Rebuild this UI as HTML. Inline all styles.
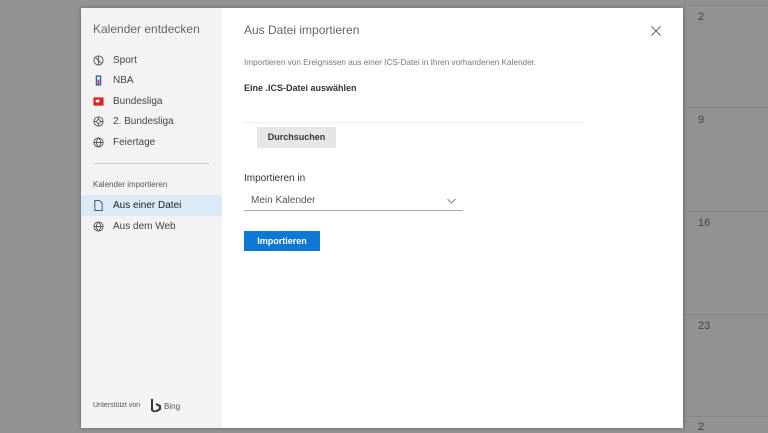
<!DOCTYPE html>
<html><head><meta charset="utf-8"><style>
*{margin:0;padding:0;box-sizing:border-box}
body{width:768px;height:432px;overflow:hidden;background:#929292;font-family:"Liberation Sans",sans-serif;position:relative;color:#333}
.hl{position:absolute;left:684px;right:0;height:1px;background:#888}
.vl{position:absolute;left:684px;top:0;width:1px;height:432px;background:#888}
.num{position:absolute;left:698px;font-size:11px;color:#444}
.modal{position:absolute;left:81px;top:8px;width:602px;height:420px;background:#fff;box-shadow:0 0 4px rgba(0,0,0,.3)}
.side{position:absolute;left:0;top:0;width:141px;height:420px;background:#f3f3f3}
.t{position:absolute;white-space:nowrap}
.ic{position:absolute;left:12px;width:11px;height:11px}
</style></head><body>
<div class="vl"></div>
<div class="hl" style="top:5px"></div><div class="hl" style="top:107px"></div><div class="hl" style="top:211px"></div><div class="hl" style="top:314px"></div><div class="hl" style="top:416px"></div>
<div class="num" style="top:11px">2</div><div class="num" style="top:114px">9</div><div class="num" style="top:217px">16</div><div class="num" style="top:320px">23</div><div class="num" style="top:421px">2</div>
<div class="modal">
<div class="side">
<div class="t" style="left:12px;top:14px;font-size:12px;color:#666">Kalender entdecken</div>
<svg class="ic" style="top:47px" viewBox="0 0 12 12"><circle cx="6" cy="6" r="5" fill="none" stroke="#555"/><path d="M3 3l6 6M6 1v10" stroke="#555" fill="none"/></svg>
<div class="t" style="left:32px;top:47px;font-size:10px;color:#444">Sport</div>
<svg class="ic" style="top:67px" viewBox="0 0 12 12"><rect x="3" y="0.5" width="6" height="11" fill="#2563b8"/><rect x="4.5" y="2" width="3" height="8" fill="#fff"/><rect x="5" y="5" width="2" height="5" fill="#d33"/></svg>
<div class="t" style="left:32px;top:67px;font-size:10px;color:#444">NBA</div>
<svg class="ic" style="top:88px" viewBox="0 0 12 12"><rect x="0.5" y="1.5" width="11" height="9" fill="#e32020"/><rect x="3" y="4" width="4" height="3" fill="#fff"/></svg>
<div class="t" style="left:32px;top:88px;font-size:10px;color:#444">Bundesliga</div>
<svg class="ic" style="top:108px" viewBox="0 0 12 12"><circle cx="6" cy="6" r="5" fill="none" stroke="#555"/><circle cx="6" cy="6" r="2" fill="none" stroke="#555"/><path d="M6 1v3M6 8v3M1 6h3M8 6h3" stroke="#555"/></svg>
<div class="t" style="left:32px;top:108px;font-size:10px;color:#444">2. Bundesliga</div>
<svg class="ic" style="top:129px" viewBox="0 0 12 12"><circle cx="6" cy="6" r="5" fill="none" stroke="#555"/><path d="M1 6h10M6 1c-3 3-3 7 0 10M6 1c3 3 3 7 0 10" stroke="#555" fill="none"/></svg>
<div class="t" style="left:32px;top:129px;font-size:10px;color:#444">Feiertage</div>
<div style="position:absolute;left:12px;top:155px;width:116px;height:1px;background:#ccc"></div>
<div class="t" style="left:12px;top:172px;font-size:8px;color:#555">Kalender importieren</div>
<div style="position:absolute;left:0;top:187px;width:141px;height:21px;background:#dce9f7"></div>
<svg class="ic" style="top:192px" viewBox="0 0 12 12"><path d="M2 .5h5l3 3v8H2z" fill="none" stroke="#444"/></svg>
<div class="t" style="left:32px;top:192px;font-size:10px;color:#222">Aus einer Datei</div>
<svg class="ic" style="top:213px" viewBox="0 0 12 12"><circle cx="6" cy="6" r="5" fill="none" stroke="#555"/><path d="M1 6h10M6 1c-3 3-3 7 0 10M6 1c3 3 3 7 0 10" stroke="#555" fill="none"/></svg>
<div class="t" style="left:32px;top:213px;font-size:10px;color:#444">Aus dem Web</div>
<div class="t" style="left:12px;top:394px;font-size:7px;color:#555">Unterstützt von</div>
<svg style="position:absolute;left:70px;top:391px" width="10" height="13" viewBox="0 0 10 13"><path d="M1 0v11l3 2 5-3V7L5 5" fill="none" stroke="#333" stroke-width="2"/></svg>
<div class="t" style="left:83px;top:394px;font-size:8px;color:#555">Bing</div>
</div>
<div class="t" style="left:163px;top:15px;font-size:12px;color:#666">Aus Datei importieren</div>
<svg style="position:absolute;left:570px;top:18px" width="10" height="10" viewBox="0 0 10 10"><path d="M.5.5l9 9M9.5.5l-9 9" stroke="#666" stroke-width="1"/></svg>
<div class="t" style="left:163px;top:50px;font-size:8.2px;color:#777">Importieren von Ereignissen aus einer ICS-Datei in Ihren vorhandenen Kalender.</div>
<div class="t" style="left:163px;top:75px;font-size:9px;font-weight:bold;color:#333">Eine .ICS-Datei auswählen</div>
<div style="position:absolute;left:163px;top:114px;width:340px;height:1px;background:#f0f0f0"></div>
<div style="position:absolute;left:176px;top:119px;width:79px;height:21px;background:#e6e6e6;font-size:9px;font-weight:bold;text-align:center;line-height:20px;color:#333">Durchsuchen</div>
<div class="t" style="left:163px;top:165px;font-size:10px;color:#333">Importieren in</div>
<div class="t" style="left:170px;top:187px;font-size:10px;color:#555">Mein Kalender</div>
<svg style="position:absolute;left:366px;top:190px" width="9" height="6" viewBox="0 0 9 6"><path d="M.5 1l4 4 4-4" fill="none" stroke="#888"/></svg>
<div style="position:absolute;left:163px;top:202px;width:219px;height:1px;background:#aaa"></div>
<div style="position:absolute;left:163px;top:223px;width:76px;height:20px;background:#0f78d4;color:#fff;font-size:9px;font-weight:bold;text-align:center;line-height:20px">Importieren</div>
</div>
</body></html>
